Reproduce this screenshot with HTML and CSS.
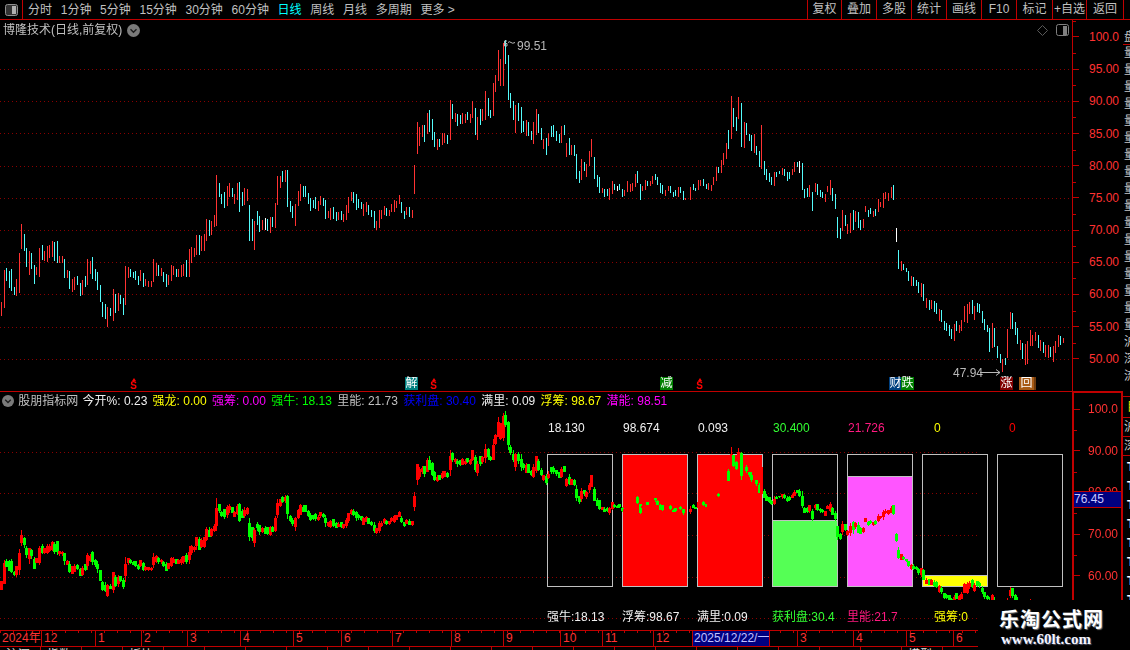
FILE: index.html
```html
<!DOCTYPE html>
<html lang="zh">
<head>
<meta charset="utf-8">
<title>博隆技术 日线</title>
<link rel="stylesheet" href="styles.css">
</head>
<body>
<div class="app">
  <header class="toolbar">
    <div class="panel-btn">
      <svg width="13" height="12" viewBox="0 0 13 12"><rect x=".5" y=".5" width="12" height="11" rx="2" fill="#333" stroke="#909090"/><rect x="7" y="2" width="4" height="8" fill="#b0b0b0"/></svg>
    </div>
    <nav class="periods">
      <span>分时</span><span>1分钟</span><span>5分钟</span><span>15分钟</span><span>30分钟</span><span>60分钟</span><span class="active">日线</span><span>周线</span><span>月线</span><span>多周期</span><span>更多 &gt;</span>
    </nav>
    <nav class="actions">
      <span>复权</span><span>叠加</span><span>多股</span><span>统计</span><span>画线</span><span>F10</span><span>标记</span><span>+自选</span><span>返回</span>
    </nav>
  </header>

  <main class="workspace">
    <section class="pane pane-upper">
      <div class="grid-upper"><i></i><i></i><i></i><i></i><i></i><i></i><i></i><i></i><i></i><i></i></div>
      <canvas id="priceChart" class="chart" width="1072" height="371"></canvas>
      <div class="pane-title">
        <div class="title-left">
          <span>博隆技术(日线,前复权)</span>
          <svg class="chev" width="13" height="13" viewBox="0 0 13 13"><circle cx="6.5" cy="6.5" r="6.5" fill="#7a7a7a"/><path d="M3.5 5.2l3 3 3-3" fill="none" stroke="#1c1c1c" stroke-width="1.4"/></svg>
        </div>
        <div class="title-right">
          <svg width="11" height="11" viewBox="0 0 11 11"><path d="M5.5.5l5 5-5 5-5-5z" fill="none" stroke="#5a5a5a"/></svg>
          <svg width="13" height="12" viewBox="0 0 13 12"><rect x=".5" y=".5" width="12" height="11" rx="2" fill="none" stroke="#808080"/><rect x="7" y="2" width="4" height="9" fill="#808080"/></svg>
        </div>
      </div>
      <svg class="note note-high-line" width="14" height="7" viewBox="0 0 14 7"><path d="M4 1H1.500V6M1.500 3.500H4V6H1.500M5 2.500q1.500-1.500 3 0t4 0" fill="none" stroke="#b8b8b8"/></svg>
      <span class="note note-high">99.51</span>
      <span class="note note-low">47.94</span>
      <svg class="note note-low-arrow" width="21" height="7" viewBox="0 0 21 7"><path d="M0 3.500H20M16 .5l4 3-4 3" fill="none" stroke="#b8b8b8"/></svg>
      <span class="mark-s mark-s1">S</span>
      <span class="mark-s mark-s2">S</span>
      <span class="mark-s mark-s3">S</span>
      <span class="tag tag-jie">解</span>
      <span class="tag tag-jian">减</span>
      <span class="tag tag-cai">财</span>
      <span class="tag tag-die">跌</span>
      <span class="tag tag-zhang">涨</span>
      <span class="tag tag-hui">回</span>
    </section>

    <aside class="axis axis-upper">
      <div class="tick">100.0</div><div class="tick">95.00</div><div class="tick">90.00</div><div class="tick">85.00</div><div class="tick">80.00</div><div class="tick">75.00</div><div class="tick">70.00</div><div class="tick">65.00</div><div class="tick">60.00</div><div class="tick">55.00</div><div class="tick">50.00</div>
    </aside>

    <aside class="side side-upper">
      <div class="side-cell side-head">盘</div>
      <div class="side-cell side-list">量量量量量量量量量量量量量量量量量沪深流</div>
    </aside>

    <section class="pane pane-lower">
      <div class="grid-lower"><i></i><i></i><i></i><i></i><i></i></div>
      <div class="stats">
        <div class="stat"><div class="stat-value c-white">18.130</div><div class="box"></div><div class="stat-label c-white">强牛:18.13</div></div>
        <div class="stat"><div class="stat-value c-white">98.674</div><div class="box"><div class="fill fill-red"></div></div><div class="stat-label c-white">浮筹:98.67</div></div>
        <div class="stat"><div class="stat-value c-white">0.093</div><div class="box"><div class="fill fill-red"></div></div><div class="stat-label c-white">满里:0.09</div></div>
        <div class="stat"><div class="stat-value c-lime">30.400</div><div class="box"><div class="fill fill-green"></div></div><div class="stat-label c-lime">获利盘:30.4</div></div>
        <div class="stat"><div class="stat-value c-pink">21.726</div><div class="box"><div class="fill fill-magenta"></div></div><div class="stat-label c-pink">里能:21.7</div></div>
        <div class="stat"><div class="stat-value stat-zero c-yellow">0</div><div class="box"><div class="fill fill-yellow"></div></div><div class="stat-label stat-zero c-yellow">强筹:0</div></div>
        <div class="stat"><div class="stat-value stat-zero c-red">0</div><div class="box"></div></div>
      </div>
      <canvas id="candleChart" class="chart" width="1072" height="209"></canvas>
      <div class="legend">
        <svg class="chev" width="12" height="12" viewBox="0 0 13 13"><circle cx="6.5" cy="6.5" r="6.5" fill="#7a7a7a"/><path d="M3.5 5.2l3 3 3-3" fill="none" stroke="#1c1c1c" stroke-width="1.4"/></svg>
        <span class="c-gray legend-name">股朋指标网</span>
        <span class="c-white">今开%: 0.23</span>
        <span class="c-yellow">强龙: 0.00</span>
        <span class="c-magenta">强筹: 0.00</span>
        <span class="c-green">强牛: 18.13</span>
        <span class="c-gray">里能: 21.73</span>
        <span class="c-blue">获利盘: 30.40</span>
        <span class="c-white">满里: 0.09</span>
        <span class="c-yellow">浮筹: 98.67</span>
        <span class="c-magenta">潜能: 98.51</span>
      </div>
    </section>

    <aside class="axis axis-lower">
      <div class="tick-list">
        <div class="tick">100.0</div><div class="tick">90.00</div><div class="tick">80.00</div><div class="tick">70.00</div><div class="tick">60.00</div>
      </div>
      <div class="cursor-price">76.45</div>
    </aside>

    <aside class="side side-lower">
      <div class="side-cell side-a"></div>
      <div class="side-cell side-b">目</div>
      <div class="side-cell side-c">沪</div>
      <div class="side-cell side-c">深</div>
      <div class="side-cell side-d">T T T T T T T T</div>
    </aside>
  </main>

  <div class="timeline">
    <span>2024年</span><span>12</span><span>1</span><span>2</span><span>3</span><span>4</span><span>5</span><span>6</span><span>7</span><span>8</span><span>9</span><span>10</span><span>11</span><span>12</span><span class="cursor-date">2025/12/22/一</span><span></span><span>3</span><span>4</span><span>5</span><span>6</span>
  </div>
  <div class="tabs">
    <span>沪深</span><span>指数</span><span></span><span>板块</span><span></span><span></span><span></span><span></span><span></span><span></span><span></span><span></span><span></span><span></span><span></span><span></span><span></span><span></span><span></span><span></span><span></span><span></span><span>模型</span>
  </div>

  <div class="watermark">
    <div class="wm-name">乐淘公式网</div>
    <div class="wm-url">www.60lt.com</div>
  </div>
</div>
<script src="chart.js"></script>
</body>
</html>
```

FILE: styles.css
```css
* { box-sizing: border-box; }
html, body { margin: 0; background: #000; }
body { font: 12px/16px "Liberation Sans", "Noto Sans CJK SC", sans-serif; color: #c0c0c0; }
.app { position: relative; width: 1130px; height: 650px; overflow: hidden; background: #000; }

/* toolbar */
.toolbar { display: flex; height: 20px; border-bottom: 1px solid #c00000; white-space: nowrap; }
.panel-btn { width: 23px; flex: none; display: flex; align-items: center; justify-content: center; border-right: 1px solid #c00000; }
.periods { display: flex; gap: 8.7px; padding-left: 5px; align-items: center; flex: 1; }
.periods .active { color: #00ffff; }
.actions { display: grid; grid-template-columns: 34px 35px 35px 35px 35px 35px 36px 34px 37px; width: 317px; margin-right: 6px; border-right: 1px solid #c00000; }
.actions span { border-left: 1px solid #c00000; text-align: center; line-height: 18px; }

/* layout */
.workspace { display: grid; grid-template-columns: 1072px 51px 7px; grid-template-rows: 371px 239px; }
.pane { position: relative; overflow: hidden; }
.pane-lower { border-top: 1px solid #c00000; }
.chart { position: absolute; left: 0; top: 0; display: block; }
.pane-lower .chart { top: -1px; }

.pane-title { position: relative; display: flex; justify-content: space-between; align-items: center; height: 20px; padding: 0 3px; }
.title-left { display: flex; align-items: center; gap: 5px; }
.title-right { display: flex; align-items: center; gap: 8px; }

.grid-upper, .grid-lower { position: absolute; left: 0; right: 0; }
.grid-upper { top: 49px; }
.grid-upper i { display: block; height: 32.2px; background: linear-gradient(90deg, #8a0000 1px, transparent 1px) 0 0 / 4px 1px repeat-x; }
.grid-lower { top: 59.500px; width: 978px; }
.grid-lower i { display: block; height: 41.7px; background: linear-gradient(90deg, #8a0000 1px, transparent 1px) 0 0 / 4px 1px repeat-x; }

/* notes on the chart */
.note { position: absolute; color: #b8b8b8; line-height: 14px; }
.note-high { left: 517px; top: 19px; }
.note-high-line { left: 503px; top: 20px; }
.note-low { left: 953px; top: 346px; }
.note-low-arrow { left: 980px; top: 349px; }

.mark-s { position: absolute; top: 358px; width: 7px; color: #ff0000; font: bold 10px/9px "Liberation Sans", sans-serif; text-align: center; }
.mark-s::before { content: ""; display: block; width: 0; height: 0; margin: 0 auto; border: solid transparent; border-width: 0 2.5px 3px; border-bottom-color: #ff0000; }
.mark-s1 { left: 130px; }
.mark-s2 { left: 430px; }
.mark-s3 { left: 696px; }

.tag { position: absolute; top: 357px; width: 13px; height: 13px; color: #fff; font-size: 12px; line-height: 13px; text-align: center; }
.tag-jie { left: 405px; background: #008080; }
.tag-jian { left: 660px; background: #008000; }
.tag-cai { left: 889px; background: #004080; }
.tag-die { left: 901px; background: #008000; }
.tag-zhang { left: 1000px; background: #800000; }
.tag-hui { left: 1019px; width: 15px; background: #a85a14; box-shadow: 2px 0 0 #6e3a0c; }

/* axes */
.axis { position: relative; color: #ff3232; overflow: hidden; }
.axis-upper { border-left: 1px solid #c00000; padding-top: .9px; }
.tick { display: flex; align-items: center; justify-content: flex-end; padding-right: 4px; background: linear-gradient(#c00000, #c00000) 0 50% / 6px 1px no-repeat, linear-gradient(#c00000, #c00000) 0 0 / 3px 1px no-repeat; }
.axis-upper .tick { height: 32.2px; }
.axis-lower { border: solid #c00000; border-width: 2px 2px 0; }
.tick-list { margin-top: -4.800px; }
.axis-lower .tick { height: 41.7px; padding-right: 3px; }
.cursor-price { position: absolute; left: 0; right: 0; top: 98px; height: 17px; padding-left: 0; background: #000080; border: solid #c00000; border-width: 1px 0; color: #c8c8ff; line-height: 15px; }

/* narrow panel on the far right */
.side { overflow: hidden; color: #c8c8c8; }
.side-cell { overflow: hidden; width: 7px; border-bottom: 1px solid #c00000; padding-left: 1px; }
.side-head { height: 25px; line-height: 34px; color: #c0c0c0; }
.side-list { height: 346px; border-bottom: 0; line-height: 17px; }
.side-a { height: 6px; }
.side-b { height: 21px; color: #e0e000; line-height: 20px; padding-left: 4px; }
.side-c { height: 19px; line-height: 18px; }
.side-d { height: 194px; border-bottom: 0; color: #fff; font-weight: bold; line-height: 19px; padding: 2px 0 0 4px; word-spacing: 20px; }

/* stat boxes */
.stats { position: absolute; left: 547px; top: 28px; display: grid; grid-template-columns: repeat(7, 66px); column-gap: 9px; }
.stat { white-space: nowrap; }
.stat-value { height: 18px; padding-left: 1px; }
.stat-zero { padding-left: 12px; }
.box { display: flex; flex-direction: column; justify-content: flex-end; height: 133px; margin-top: 16px; border: 1px solid #c0c0c0; }
.fill { border-top: 1px solid #c0c0c0; }
.fill-red { height: 131px; background: #ff0000; border-top: 0; }
.fill-green { height: 66px; background: #55ff55; }
.fill-magenta { height: 110px; background: #ff55ff; }
.fill-yellow { height: 11px; background: #ffff00; }
.stat-label { margin-top: 22px; }

/* legend */
.legend { position: relative; display: flex; align-items: center; gap: 5.3px; height: 17px; padding-left: 2px; white-space: nowrap; }
.legend-name { margin-left: -1px; margin-right: -1px; }
.c-white { color: #f0f0f0; }
.c-gray { color: #c0c0c0; }
.c-yellow { color: #ffff00; }
.c-magenta { color: #ff00ff; }
.c-green { color: #00ff00; }
.c-blue { color: #0000ff; }
.c-lime { color: #33ff33; }
.c-pink { color: #ff1a80; }
.c-red { color: #ff0000; }

/* time axis */
.timeline { display: grid; grid-template-columns: 42px 54px 46px 46px 53px 53px 48px 51px 59px 52px 57px 42px 51px 39px 77px 28px 56px 53px 47px 24px; width: 978px; height: 17px; border: solid #c00000; border-width: 1px 0; color: #ff3232; background: repeating-linear-gradient(90deg, #c00000 0 1px, transparent 1px 13px) 0 0 / 100% 2px no-repeat; white-space: nowrap; }
.timeline span { border-right: 1px solid #c00000; padding-left: 2px; line-height: 15px; overflow: hidden; }
.timeline span:last-child { border-right: 0; }
.timeline .cursor-date { background: #000080; color: #c0c0ff; padding-left: 1px; }
.tabs { display: grid; grid-template-columns: repeat(24, 41px); height: 3px; overflow: hidden; color: #e0e0e0; }
.tabs span { border-right: 1px solid #c00000; padding-left: 6px; line-height: 16px; }

/* watermark */
.watermark { position: absolute; right: 0; bottom: 0; width: 152px; height: 50px; background: #000; padding: 7px 0 0 21px; }
.wm-name { font: bold 20px/24px "Noto Sans CJK SC", sans-serif; letter-spacing: 1px; color: #fff; text-shadow: 1px 1px 1px #777; white-space: nowrap; }
.wm-url { font: bold 15px/15px "Liberation Serif", serif; color: #f4f4ff; text-shadow: 1px 1px 1px #556; white-space: nowrap; margin: 1px 0 0 2px; }
```

FILE: chart.js
```js
// Daily bars read as "xCtop-bottom" in chart units; each group has its own origin and a scale of 3 units per pixel.
var groups = [
  { x: 0, y: 170, bars: "4r396-438 13r300-413 19c294-333 28c302-354 34c297-363 43c351-375 49r327-378 58r249-369 64r162-237 73c192-243 79c234-291 88r243-315 94c249-297 103c285-342 109r291-316 118r234-321 127c225-270 133r243-273 142r228-276 148r225-264 157r213-261 163c216-273 172c213-279 178r258-279 187r258-279 193c267-324 202r300-324 208c303-357 217r327-366 223r321-360 232c318-345 241c339-378 247r330-375 256c318-351 262r267-345 271r273-312 277c261-327 286c297-333 292c306-360 301c345-396 307c396-441 316c402-447 322r411-471 331c414-438 340r357-453 346c372-429 355r369-423 361c375-402 370c384-435 376r288-405 385r291-324 391c297-321 400c306-324 406c303-330 415c318-345 421r300-333 430c309-351 436r327-348 445r333-351 454r333-351 460r267-336 469r279-318 475c285-318 484r294-318 490c306-336 499c312-351 505r315-345 514r285-333 520r288-315 529c297-321 535r297-321 544r285-321 550r282-318 559c270-321 568r237-321 574r231-279 583r234-262 589r195-255 598c195-255 604r198-243 613r192-243 619r147-213 628c150-198 634r153-195 643r135-171 649r15-168 658c39-81 664c72-102 673c66-114 682r48-108 688r39-81 697c54-81 703r72-102 712r39-90 718c36-126 727c66-108 733r54-105 742r57-93 748c105-213 757c147-213 763r153-240 772c123-165 778c138-186 787r150-180 796w144-180 802c147-183 811r141-189 817c141-171 826r99-174 832r18-105 841r18-54 847c3-36 856r0-36 862c0-111 871c93-126 877c108-144 886r102-168 895r63-108" },
  { x: 295, y: 150, bars: "10r123-165 16r102-153 25c108-141 31c108-141 40c129-162 46c144-183 55c150-174 61c141-177 70r153-183 76r138-165 85c144-168 91c150-207 100r183-204 106r174-210 115c171-207 124c186-213 130r186-210 139c183-210 145r192-216 154r165-210 160r141-189 169r126-153 175c126-159 184c132-180 190c147-174 199c156-177 205r162-198 214r156-186 220c165-195 229c180-201 238c183-234 244r213-240 253r180-234 259r180-207 268r168-195 274c174-198 283r180-198 289r162-186 298r150-186 304r153-174 313r135-162 319c156-189 328c183-207 334r171-195 343c171-201 352r180-204" },
  { x: 400, y: 30, bars: "43r405-492 52r276-372 58r291-348 67r285-321 73c285-336 82r249-312 88c240-306 97c267-330 103c306-351 112r327-360 118c327-351 127r309-345 133r309-339 142c315-342 151r210-330 157c222-267 166r249-276 172c252-288 181c255-282 187r249-282 196r252-279 202c246-270 211r252-279 217r213-264 226c234-315 232r261-330 241c237-285 247r237-273 256r183-270 265c204-258 271c240-264 280r159-258 286r135-186 295r60-153 301r87-168 310r39-168 316c30-102 325c75-210 331c189-234 340c213-270 346r225-309 355c219-273 364c231-309 370c273-306 379r270-318 385c276-318 394c303-330 400r276-342 409r237-315 415c252-309 424c294-330 430r327-357 439c324-375 445r309-348 454c288-321 460c285-321 469c303-333 478c312-339 484r288-339 493c285-315 499r339-381 508c324-375 514r345-375 523c345-378 529c372-447 538c423-459 544r387-450 553c396-423 559r402-441 568r363-408 574r327-381 583c381-447 592c435-471 598c441-489 607r474-489 613c477-501 622c477-498 628r474-510 637r453-492 643c462-480 652w468-483 658c462-480 667c477-501 673r480-498 682r453-486 691r462-486 697r459-483 706r432-471 712c423-459 721c462-510 727r468-483 736r450-480 742c453-468 751r453-468 757r438-462 766c432-450 772c441-465 781c459-489 787c465-492 796r480-498 805r468-483 811c468-489 820c486-501 826c480-498 835r471-501 841c471-489 850c483-510 856r504-510 871r471-510 880c462-480 886c474-483 895r450-480" },
  { x: 700, y: 90, bars: "1r270-288 10c267-288 19c282-297 25r279-300 34r285-303 40r261-285 49r231-273 55c231-249 64r210-249 70r189-225 79r159-207 85c120-177 94r18-147 100c54-111 109c81-123 115r21-87 124c39-171 133r96-174 139c99-135 148c132-153 154c135-183 163r132-189 169c168-195 178c183-231 184r105-237 193c213-255 199c237-270 208c249-276 214c261-285 223r246-288 229c246-261 238c243-252 247r234-255 253c237-258 262c246-273 268c246-267 277r237-255 283r216-246 292c216-231 298w213-249 307c219-300 313c297-324 322c294-321 328r285-321 337c306-363 346r279-306 352c282-315 361c300-321 367c306-324 376r312-336 382r288-306 391r270-315 397c294-333 406c312-357 412c381-444 421c414-447 427r360-423 436c375-408 442r402-432 451r369-429 460c360-420 466r363-396 475c366-414 481c390-420 490r387-414 496r348-366 505c360-381 511c354-372 520r363-381 526c357-378 535r327-366 541r336-351 550r309-354 556r306-327 565r309-333 574r291-324 580c285-330 589w414-456 595c480-537 604r513-543 610c522-540 619c534-546 625c543-573 634r558-588 640c561-588 649c570-588 655c576-609 664r579-621 670c582-633 679r624-654 688c630-660 694r630-657 703c633-666 709c639-672 718r657-693 724c660-696 733c693-720 739c699-723 748c705-738 754c717-747 763r702-753 769c693-723 778r705-729 784r690-723 793r648-696 802r642-699 808r636-672 817c630-672 823r648-690 832c639-666 838c642-669 847c663-699 853c687-720 862c705-726 868c714-786 877r699-774 883c714-771 892c768-804 901c792-819 907r807-846 916c804-825 922r717-804 931r666-717 937c669-717 946c696-735 952c714-762 961r750-780 967c759-807 976r762-825 982r753-822 991r720-768 997r735-768 1006r726-753 1015c735-774 1021r750-783 1030c756-789 1036r765-801 1045r765-804 1051c771-801 1060r768-816 1066r753-789 1075r735-771 1081c738-765 1090r744-759" }
];

function parseBars() {
  var out = [];
  groups.forEach(function (g) {
    g.bars.split(" ").forEach(function (s) {
      var m = /^(\d+)([rcw])(\d+)-(\d+)$/.exec(s);
      out.push({
        x: Math.floor(+m[1] / 3 + g.x),
        kind: m[2],
        top: +m[3] / 3 + g.y,
        bottom: +m[4] / 3 + g.y
      });
    });
  });
  return out;
}

var bars = parseBars();
var UPPER_COLORS = { r: "#ff3232", c: "#54fcfc", w: "#ffffff" };

function drawPrice() {
  var ctx = document.getElementById("priceChart").getContext("2d");
  var top = 20;
  bars.forEach(function (b) {
    ctx.fillStyle = UPPER_COLORS[b.kind];
    ctx.fillRect(b.x, Math.round(b.top) - top, 1, Math.max(1, Math.round(b.bottom - b.top)));
  });
}

// Same bars on the lower pane's scale: 100 -> y 409, 4.17px per unit vs 6.44px above.
function drawCandles() {
  var ctx = document.getElementById("candleChart").getContext("2d");
  var top = 391;
  var map = function (u) { return 409 + (u - 37) * 0.6475 - top; };
  bars.forEach(function (b, i) {
    var t = map(b.top), e = map(b.bottom), h = e - t;
    var a = ((i * 37) % 11) / 11 * 0.32, c = ((i * 53) % 13) / 13 * 0.32;
    var bt = Math.round(t + h * a), bb = Math.round(e - h * c);
    var color = b.kind === "r" ? "#ff0000" : "#00ff00";
    ctx.fillStyle = color;
    ctx.fillRect(b.x, Math.round(t), 1, Math.max(1, Math.round(h)));
    ctx.fillRect(b.x - 1, bt, 3, Math.max(1, bb - bt));
  });
}

drawPrice();
drawCandles();
```
